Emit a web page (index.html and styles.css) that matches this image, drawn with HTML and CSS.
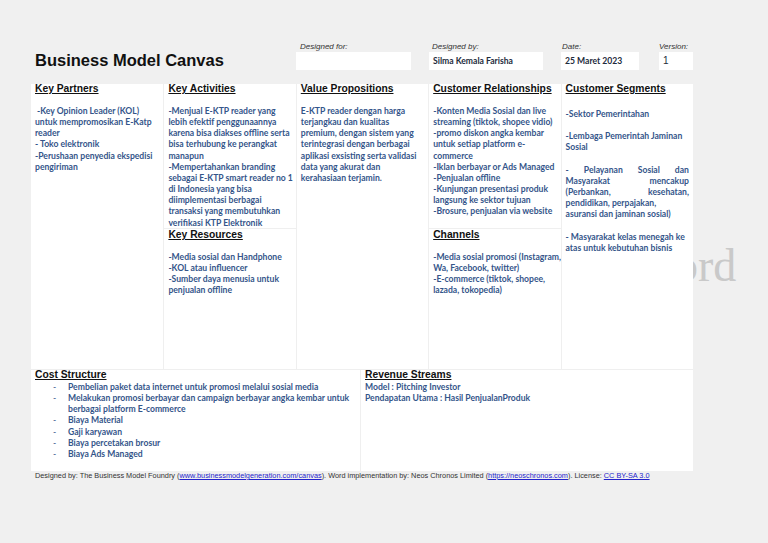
FILE: index.html
```html
<!DOCTYPE html>
<html lang="id">
<head>
<meta charset="utf-8">
<title>Business Model Canvas</title>
<link rel="stylesheet" href="styles.css">
</head>
<body>
<div class="watermark"><span class="watermark-text">ord</span></div>
<main class="page">
  <header class="top">
    <h1 class="title">Business Model Canvas</h1>
    <div class="field field-for"><span class="label">Designed for:</span><div class="box"></div></div>
    <div class="field field-by"><span class="label">Designed by:</span><div class="box">Silma Kemala Farisha</div></div>
    <div class="field field-date"><span class="label">Date:</span><div class="box">25 Maret 2023</div></div>
    <div class="field field-ver"><span class="label">Version:</span><div class="box box-ver">1</div></div>
  </header>
  <section class="canvas">
    <div class="cell tall first">
      <h2>Key Partners</h2>
      <p class="txt">&nbsp;-Key Opinion Leader (KOL)<br>untuk mempromosikan E-Katp<br>reader<br>- Toko elektronik<br>-Perushaan penyedia ekspedisi<br>pengiriman</p>
    </div>
    <div class="cell">
      <h2>Key Activities</h2>
      <p class="txt">-Menjual E-KTP reader yang<br>lebih efektif penggunaannya<br>karena bisa diakses offline serta<br>bisa terhubung ke perangkat<br>manapun<br>-Mempertahankan branding<br>sebagai E-KTP smart reader no 1<br>di Indonesia yang bisa<br>diimplementasi berbagai<br>transaksi yang membutuhkan<br>verifikasi KTP Elektronik</p>
    </div>
    <div class="cell tall">
      <h2>Value Propositions</h2>
      <p class="txt">E-KTP reader dengan harga<br>terjangkau dan kualitas<br>premium, dengan sistem yang<br>terintegrasi dengan berbagai<br>aplikasi exsisting serta validasi<br>data yang akurat dan<br>kerahasiaan terjamin.</p>
    </div>
    <div class="cell">
      <h2>Customer Relationships</h2>
      <p class="txt">-Konten Media Sosial dan live<br>streaming (tiktok, shopee vidio)<br>-promo diskon angka kembar<br>untuk setiap platform e-<br>commerce<br>-Iklan berbayar or Ads Managed<br>-Penjualan offline<br>-Kunjungan presentasi produk<br>langsung ke sektor tujuan<br>-Brosure, penjualan via website</p>
    </div>
    <div class="cell tall">
      <h2>Customer Segments</h2>
      <div class="txt segs">
        <p>-Sektor Pemerintahan</p>
        <p>-Lembaga Pemerintah Jaminan<br>Sosial</p>
        <p><span class="just">- Pelayanan Sosial dan</span><span class="just">Masyarakat mencakup</span><span class="just">(Perbankan, kesehatan,</span>pendidikan, perpajakan,<br>asuransi dan jaminan sosial)</p>
        <p>- Masyarakat kelas menegah ke<br>atas untuk kebutuhan bisnis</p>
      </div>
    </div>
    <div class="cell lower">
      <h2>Key Resources</h2>
      <p class="txt">-Media sosial dan Handphone<br>-KOL atau influencer<br>-Sumber daya menusia untuk<br>penjualan offline</p>
    </div>
    <div class="cell lower">
      <h2>Channels</h2>
      <p class="txt">-Media sosial promosi (Instagram,<br>Wa, Facebook, twitter)<br>-E-commerce (tiktok, shopee,<br>lazada, tokopedia)</p>
    </div>
  </section>
  <section class="bottom">
    <div class="cell cost">
      <h2>Cost Structure</h2>
      <ul class="txt list">
        <li>Pembelian paket data internet untuk promosi melalui sosial media</li>
        <li>Melakukan promosi berbayar dan campaign berbayar angka kembar untuk<br>berbagai platform E-commerce</li>
        <li>Biaya Material</li>
        <li>Gaji karyawan</li>
        <li>Biaya percetakan brosur</li>
        <li>Biaya Ads Managed</li>
      </ul>
    </div>
    <div class="cell rev">
      <h2>Revenue Streams</h2>
      <p class="txt">Model : Pitching Investor<br>Pendapatan Utama : Hasil PenjualanProduk</p>
    </div>
  </section>
  <footer class="foot">Designed by: The Business Model Foundry (<a href="#">www.businessmodelgeneration.com/canvas</a>). Word implementation by: Neos Chronos Limited (<a href="#">https://neoschronos.com</a>). License: <a href="#">CC BY-SA 3.0</a></footer>
</main>
</body>
</html>
```
FILE: styles.css
```css
* { box-sizing: border-box; }
html, body { margin: 0; padding: 0; }
body {
  width: 768px;
  height: 543px;
  background: #f0f0f0;
  overflow: hidden;
  position: relative;
  font-family: "Liberation Sans", Arial, sans-serif;
}
.watermark {
  position: absolute;
  left: 693px;
  top: 243px;
  width: 60px;
  overflow: hidden;
  font-family: "Liberation Serif", serif;
  font-size: 46px;
  line-height: 46px;
  color: #c9c9c9;
  white-space: nowrap;
}
.watermark-text {
  display: block;
  margin-left: -18px;
}
.page {
  position: relative;
  width: 662px;
  margin-left: 31px;
  padding-top: 41px;
}
.top {
  display: flex;
  height: 43px;
}
.title {
  width: 265px;
  margin: 0;
  padding: 9px 0 0 4px;
  font-size: 16.5px;
  line-height: 21px;
  font-weight: bold;
  color: #111;
  white-space: nowrap;
}
.field { display: flex; flex-direction: column; }
.label {
  padding-left: 4px;
  font-size: 8px;
  line-height: 11px;
  font-style: italic;
  color: #333;
  white-space: nowrap;
}
.field-by .label { padding-left: 3px; }
.field-date .label { padding-left: 1px; }
.field-ver .label { padding-left: 0; }
.box {
  height: 18px;
  background: #fff;
  padding-left: 4px;
  font-family: Lato, sans-serif;
  font-weight: bold;
  font-size: 8.6px;
  line-height: 18px;
  color: #1d2b3c;
  white-space: nowrap;
}
.box-ver {
  font-family: "Liberation Sans", sans-serif;
  font-weight: normal;
  font-size: 10px;
}
.field-for { width: 115px; margin-right: 18px; }
.field-by { width: 114px; margin-right: 18px; }
.field-date { width: 78px; margin-right: 20px; }
.field-ver { width: 34px; }
.canvas {
  display: grid;
  grid-template-columns: repeat(5, 132.4px);
  grid-template-rows: 144px 141px;
  background: #fff;
}
.cell {
  padding: 0 3px 0 4px;
  border-left: 1px solid #efefef;
  overflow: hidden;
  min-width: 0;
}
.first { border-left: 0; padding-left: 4px; }
.tall { grid-row: span 2; }
.lower { border-top: 1px solid #efefef; padding-top: 1px; }
.cell:nth-child(6) { grid-column: 2; grid-row: 2; }
.cell:nth-child(7) { grid-column: 4; grid-row: 2; }
h2 {
  display: table;
  margin: -1px 0 0;
  font-size: 10.3px;
  line-height: 11px;
  font-weight: bold;
  color: #111;
  text-decoration: underline;
  white-space: nowrap;
}
.txt {
  margin: 12px 0 0;
  font-family: Lato, sans-serif;
  font-weight: bold;
  font-size: 8.6px;
  line-height: 11.15px;
  color: #34558a;
  white-space: nowrap;
}
.segs { padding-top: 3px; padding-right: 1px; }
.segs p { margin: 0 0 11.15px; }
.just {
  display: block;
  text-align: justify;
  text-align-last: justify;
}
.bottom {
  display: grid;
  grid-template-columns: 329px 333px;
  height: 102px;
  background: #fff;
  border-top: 1px solid #efefef;
}
.cost { border-left: 0; }
.list {
  margin: 2px 0 0;
  padding: 0 0 0 33px;
  list-style: none;
}
.list li { position: relative; }
.list li::before {
  content: "-";
  position: absolute;
  left: -15px;
  font-weight: normal;
}
.rev .txt { margin-top: 2px; }
.foot {
  padding: 0 0 0 4px;
  font-size: 7.33px;
  line-height: 10px;
  color: #333;
  white-space: nowrap;
}
.foot a { color: #2323cc; }
```
